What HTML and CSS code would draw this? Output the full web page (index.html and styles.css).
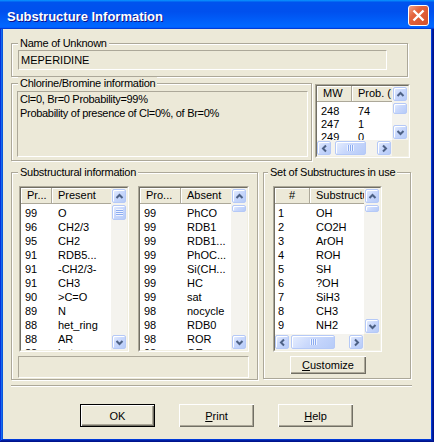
FILE: index.html
```html
<!DOCTYPE html>
<html lang="en">
  <head>
    <meta charset="UTF-8" />
    <meta name="viewport" content="width=device-width, initial-scale=1.0" />
    <title>Substructure Information</title>
    <link rel="stylesheet" href="styles.css">
  </head>
  <body>
    <div class="window">
      <div class="titlebar">
        <span class="title">Substructure Information</span>
        <span class="close">
          <svg width="19" height="19" viewBox="0 0 19 19"><path d="M4.5 4.5l10 10M14.5 4.5l-10 10" /></svg>
        </span>
      </div>

      <div class="client">
        <fieldset class="group nameGroup">
          <legend>Name of Unknown</legend>
          <div class="edit nameEdit">MEPERIDINE</div>
        </fieldset>

        <div class="row">
          <fieldset class="group clGroup">
            <legend>Chlorine/Bromine information</legend>
            <div class="edit memo">Cl=0, Br=0 Probability=99%<br>Probability of presence of Cl=0%, of Br=0%</div>
          </fieldset>

          <div class="list mwList">
            <div class="listIn withH">
              <div class="view">
                <div class="lh"><span>MW</span><span>Prob. (</span></div>
                <div class="rows">
                  <div class="r"><span>248</span><span>74</span></div>
                  <div class="r"><span>247</span><span>1</span></div>
                  <div class="r"><span>249</span><span>0</span></div>
                </div>
              </div>
              <div class="vscroll">
                <span class="sbtn"><svg class="arrow"><use href="#up" /></svg></span>
                <span class="track"><span class="thumb"></span></span>
                <span class="sbtn"><svg class="arrow"><use href="#down" /></svg></span>
              </div>
              <div class="hscroll">
                <span class="sbtn"><svg class="arrow"><use href="#left" /></svg></span>
                <span class="thumb hthumb"></span>
                <span class="track"></span>
                <span class="sbtn"><svg class="arrow"><use href="#right" /></svg></span>
              </div>
              <div class="grip"></div>
            </div>
          </div>
        </div>

        <div class="row lower">
          <fieldset class="group subGroup">
            <legend>Substructural information</legend>
            <div class="lists">
              <div class="list presentList">
                <div class="listIn">
                  <div class="view">
                    <div class="lh"><span>Pr...</span><span>Present</span></div>
                    <div class="rows">
                      <div class="r"><span>99</span><span>O</span></div>
                      <div class="r"><span>96</span><span>CH2/3</span></div>
                      <div class="r"><span>95</span><span>CH2</span></div>
                      <div class="r"><span>91</span><span>RDB5...</span></div>
                      <div class="r"><span>91</span><span>-CH2/3-</span></div>
                      <div class="r"><span>91</span><span>CH3</span></div>
                      <div class="r"><span>90</span><span>&gt;C=O</span></div>
                      <div class="r"><span>89</span><span>N</span></div>
                      <div class="r"><span>88</span><span>het_ring</span></div>
                      <div class="r"><span>88</span><span>AR</span></div>
                      <div class="r"><span>88</span><span>het...</span></div>
                    </div>
                  </div>
                  <div class="vscroll">
                    <span class="sbtn"><svg class="arrow"><use href="#up" /></svg></span>
                    <span class="track"><span class="thumb bigThumb"></span></span>
                    <span class="sbtn"><svg class="arrow"><use href="#down" /></svg></span>
                  </div>
                </div>
              </div>

              <div class="list absentList">
                <div class="listIn">
                  <div class="view">
                    <div class="lh"><span>Pro...</span><span>Absent</span></div>
                    <div class="rows">
                      <div class="r"><span>99</span><span>PhCO</span></div>
                      <div class="r"><span>99</span><span>RDB1</span></div>
                      <div class="r"><span>99</span><span>RDB1...</span></div>
                      <div class="r"><span>99</span><span>PhOC...</span></div>
                      <div class="r"><span>99</span><span>Si(CH...</span></div>
                      <div class="r"><span>99</span><span>HC</span></div>
                      <div class="r"><span>99</span><span>sat</span></div>
                      <div class="r"><span>98</span><span>nocycle</span></div>
                      <div class="r"><span>98</span><span>RDB0</span></div>
                      <div class="r"><span>98</span><span>ROR</span></div>
                      <div class="r"><span>98</span><span>OE</span></div>
                    </div>
                  </div>
                  <div class="vscroll">
                    <span class="sbtn"><svg class="arrow"><use href="#up" /></svg></span>
                    <span class="track"><span class="thumb smallThumb"></span></span>
                    <span class="sbtn"><svg class="arrow"><use href="#down" /></svg></span>
                  </div>
                </div>
              </div>
            </div>
            <div class="edit status"></div>
          </fieldset>

          <fieldset class="group setGroup">
            <legend>Set of Substructures in use</legend>
            <div class="list setList">
              <div class="listIn withH">
                <div class="view">
                  <div class="lh"><span>#</span><span>Substructure</span></div>
                  <div class="rows">
                    <div class="r"><span>1</span><span>OH</span></div>
                    <div class="r"><span>2</span><span>CO2H</span></div>
                    <div class="r"><span>3</span><span>ArOH</span></div>
                    <div class="r"><span>4</span><span>ROH</span></div>
                    <div class="r"><span>5</span><span>SH</span></div>
                    <div class="r"><span>6</span><span>?OH</span></div>
                    <div class="r"><span>7</span><span>SiH3</span></div>
                    <div class="r"><span>8</span><span>CH3</span></div>
                    <div class="r"><span>9</span><span>NH2</span></div>
                  </div>
                </div>
                <div class="vscroll">
                  <span class="sbtn"><svg class="arrow"><use href="#up" /></svg></span>
                  <span class="track"><span class="thumb smallThumb"></span></span>
                  <span class="sbtn"><svg class="arrow"><use href="#down" /></svg></span>
                </div>
                <div class="hscroll">
                  <span class="sbtn"><svg class="arrow"><use href="#left" /></svg></span>
                  <span class="thumb hthumb wideThumb"></span>
                  <span class="track"></span>
                  <span class="sbtn"><svg class="arrow"><use href="#right" /></svg></span>
                </div>
                <div class="grip"></div>
              </div>
            </div>
            <button class="btn small"><u>C</u>ustomize</button>
          </fieldset>
        </div>

        <div class="separator"></div>

        <div class="buttons">
          <button class="btn default">OK</button>
          <button class="btn"><u>P</u>rint</button>
          <button class="btn"><u>H</u>elp</button>
        </div>
      </div>
    </div>

    <svg class="defs" width="0" height="0">
      <symbol id="up" viewBox="0 0 9 9"><polyline points="1.5,6 4.5,3 7.5,6" /></symbol>
      <symbol id="down" viewBox="0 0 9 9"><polyline points="1.5,3 4.5,6 7.5,3" /></symbol>
      <symbol id="left" viewBox="0 0 9 9"><polyline points="6,1.5 3,4.5 6,7.5" /></symbol>
      <symbol id="right" viewBox="0 0 9 9"><polyline points="3,1.5 6,4.5 3,7.5" /></symbol>
    </svg>
  </body>
</html>
```

FILE: styles.css
```css
body {
  margin: 0;
  font-family: "Liberation Sans", Arial, sans-serif;
  font-size: 11px;
  color: #000;
  background: #fff;
}
.defs {
  display: block;
}
.window {
  width: 434px;
  height: 442px;
  box-sizing: border-box;
  padding: 0 3px 3px;
  display: flex;
  flex-direction: column;
  background: #0831d9;
  box-shadow: inset -1px -1px #00138c, inset 1px 1px #0831d9, inset -2px -2px #001ea0,
    inset 2px 2px #166aee, inset -3px -3px #003bda, inset 3px 3px #0855dd;
}
.titlebar {
  height: 29px;
  box-sizing: border-box;
  margin: 0 -3px;
  padding: 2px 5px 0 7px;
  display: flex;
  align-items: center;
  justify-content: space-between;
  background: linear-gradient(180deg, #0997ff, #0053ee 8%, #0050ee 40%, #06f 88%, #06f 93%, #005bff 95%, #003dd7 96%, #003dd7);
}
.title {
  color: #fff;
  font-size: 13px;
  font-weight: bold;
  text-shadow: 1px 1px #0f1089;
  padding-top: 1px;
}
.close {
  width: 21px;
  height: 21px;
  box-sizing: border-box;
  border: 1px solid #fff;
  border-radius: 3px;
  display: flex;
  background: linear-gradient(135deg, #f3a287 0%, #e4643d 35%, #d4502a 100%);
}
.close path {
  stroke: #fff;
  stroke-width: 2.4;
  fill: none;
}
.client {
  flex: 1;
  background: #ece9d8;
  padding-top: 8px;
}

/* group boxes */
.group {
  margin: 0;
  min-width: 0;
  box-sizing: border-box;
  border: 1px solid #aca899;
  box-shadow: 1px 1px 0 #fff, inset 1px 1px 0 #fff;
}
.group legend {
  padding: 0 2px;
  line-height: 13px;
  white-space: nowrap;
  letter-spacing: -0.25px;
  background: #ece9d8;
}
.nameGroup {
  width: 397px;
  margin-left: 8px;
  padding: 0 6px 6px;
}
.clGroup {
  width: 301px;
  padding: 1px 6px 3px;
}
.subGroup {
  width: 247px;
  padding: 7px 6px 1px;
}
.setGroup {
  width: 148px;
  margin-left: 5px;
  padding: 7px 6px 4px;
}
.setGroup legend {
  margin-left: -2px;
}
.row {
  display: flex;
  align-items: flex-start;
  margin-left: 8px;
}
.lower {
  margin-top: 5px;
}

/* read-only edits */
.edit {
  box-sizing: border-box;
  border: 1px solid;
  border-color: #aca899 #fff #fff #aca899;
  background: #ece9d8;
}
.nameEdit {
  width: 369px;
  height: 20px;
  line-height: 18px;
  padding-left: 2px;
}
.memo {
  width: 291px;
  height: 66px;
  margin-left: -1px;
  padding: 0 2px;
  line-height: 14px;
  letter-spacing: -0.3px;
}
.status {
  width: 231px;
  height: 22px;
  margin-top: 4px;
}

/* list views */
.list {
  box-sizing: border-box;
  border: 1px solid;
  border-color: #aca899 #fff #fff #aca899;
}
.listIn {
  height: 100%;
  box-sizing: border-box;
  border: 1px solid;
  border-color: #716f64 #f1efe2 #f1efe2 #716f64;
  background: #fff;
  display: grid;
  grid-template-columns: 1fr 16px;
  grid-template-rows: 100%;
}
.listIn.withH {
  grid-template-rows: 1fr 16px;
}
.view {
  overflow: hidden;
  min-height: 0;
}
.lh {
  display: flex;
  height: 16px;
  white-space: nowrap;
}
.lh span {
  box-sizing: border-box;
  height: 16px;
  line-height: 15px;
  padding-left: 6px;
  background: #ece9d8;
  border-right: 1px solid #aca899;
  border-bottom: 1px solid #aca899;
  box-shadow: inset 1px 1px #fff;
}
.lh span:first-child {
  flex: none;
  width: var(--c1);
}
.lh span:last-child {
  flex: 1;
  border-right: none;
}
.rows {
  padding-top: 2px;
}
.r {
  display: flex;
  height: 14px;
  line-height: 14px;
  white-space: nowrap;
}
.r span:first-child {
  flex: none;
  width: var(--c1);
  box-sizing: border-box;
  padding-left: 4px;
}
.r span:last-child {
  padding-left: 6px;
}
.mwList {
  --c1: 35px;
  width: 95px;
  height: 74px;
  margin: 7px 0 0 3px;
}
.mwList .rows {
  padding-top: 3px;
}
.mwList .r {
  height: 13px;
  line-height: 13px;
}
.presentList {
  --c1: 31px;
  width: 110px;
  height: 166px;
}
.absentList {
  --c1: 41px;
  width: 111px;
  height: 166px;
}
.setList {
  --c1: 35px;
  width: 109px;
  height: 166px;
  margin-left: 3px;
}
.setList .lh span:first-child {
  padding-left: 0;
  text-align: center;
}
.setList .r span:first-child {
  padding-left: 3px;
}
.lists {
  display: flex;
  gap: 9px;
  margin-left: 1px;
}

/* scrollbars */
.vscroll,
.hscroll {
  display: flex;
  background: #f4f3ee;
}
.vscroll {
  flex-direction: column;
  align-items: center;
  padding: 1px 0;
}
.hscroll {
  align-items: center;
  padding: 0 1px 0 0;
}
.track {
  flex: 1;
}
.vscroll .track {
  align-self: stretch;
  display: flex;
  flex-direction: column;
  align-items: center;
}
.sbtn,
.thumb {
  box-sizing: border-box;
  width: 14px;
  height: 14px;
  border: 1px solid #b5c9f7;
  border-radius: 2px;
  background: linear-gradient(135deg, #e6eefe 0%, #c9d8fc 45%, #b6cbf8 100%);
  box-shadow: inset 1px 1px #fff;
  display: flex;
  align-items: center;
  justify-content: center;
}
.arrow {
  width: 9px;
  height: 9px;
  fill: none;
  stroke: #4d6185;
  stroke-width: 2;
}
.vscroll .thumb {
  margin-top: 2px;
  height: 11px;
}
.vscroll .bigThumb {
  height: 15px;
}
.vscroll .smallThumb {
  height: 7px;
}
.bigThumb::after {
  content: "";
  width: 7px;
  height: 7px;
  background: repeating-linear-gradient(180deg, #eef3ff 0 1px, #8cacf0 1px 2px);
}
.hthumb {
  width: 31px;
  margin-left: 4px;
}
.hthumb::after {
  content: "";
  width: 7px;
  height: 6px;
  background: repeating-linear-gradient(90deg, #eef3ff 0 1px, #8cacf0 1px 2px);
}
.wideThumb {
  width: 44px;
  margin-left: 2px;
}
.grip {
  background: #ece9d8;
}

/* separator and buttons */
.separator {
  width: 401px;
  margin: 5px 0 0 8px;
  border-top: 1px solid #aca899;
  border-bottom: 1px solid #fff;
}
.buttons {
  display: flex;
  gap: 24px;
  margin-top: 17px;
  padding-left: 77px;
}
.btn {
  width: 75px;
  height: 23px;
  box-sizing: border-box;
  padding: 0;
  font: inherit;
  color: #000;
  background: #ece9d8;
  border: none;
  box-shadow: inset 1px 1px #fff, inset -1px -1px #716f64, inset -2px -2px #aca899;
}
.btn.default {
  border: 1px solid #000;
}
.btn.small {
  width: 76px;
  height: 18px;
  margin: 4px 0 0 20px;
}
```
